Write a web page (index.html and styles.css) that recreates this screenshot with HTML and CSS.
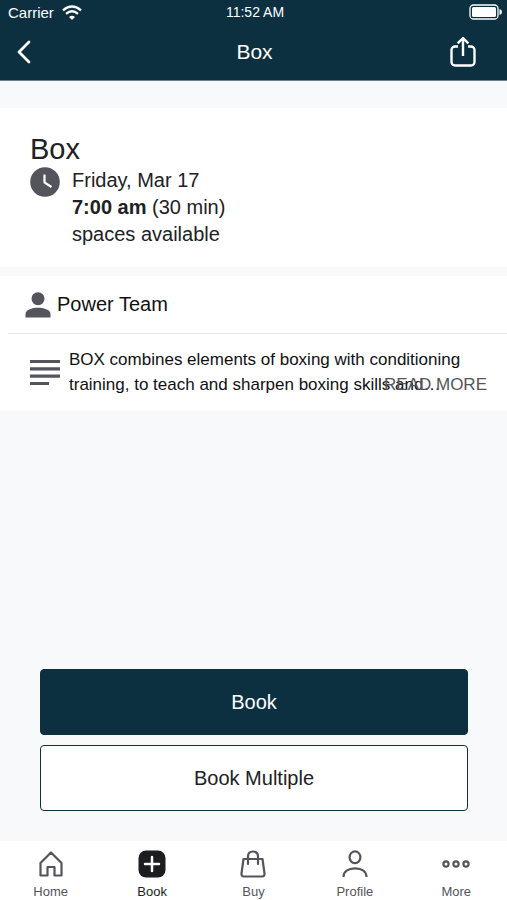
FILE: index.html
```html
<!DOCTYPE html>
<html lang="en">
<head>
<meta charset="utf-8">
<meta name="viewport" content="width=device-width, initial-scale=1">
<title>Box</title>
<link rel="stylesheet" href="styles.css">
</head>
<body>
<header class="top">
  <div class="status">
    <div class="carrier">
      <span>Carrier</span>
      <svg width="20" height="15" viewBox="0 0 20 15" aria-hidden="true"><path d="M1 5.3Q10-2.3 19 5.3M4 8.8Q10 3.8 16 8.8" fill="none" stroke="currentColor" stroke-width="2.3"/><path d="M7 12Q10 9.600 13 12L10 15Z" fill="currentColor"/></svg>
    </div>
    <time>11:52 AM</time>
    <svg class="battery" width="33" height="16" viewBox="0 0 33 16" aria-hidden="true"><rect x="1" y="1" width="28" height="14" rx="3.5" fill="none" stroke="currentColor" stroke-width="1.3"/><rect x="3" y="3" width="24" height="10" rx="1.5" fill="currentColor"/><path d="M30.5 5Q33 5.5 33 8T30.5 11Z" fill="currentColor"/></svg>
  </div>
  <div class="bar">
    <button class="icon-button" type="button" aria-label="Back"><svg width="16" height="24" viewBox="0 0 16 24"><path d="M13 2L3 12l10 10" fill="none" stroke="currentColor" stroke-width="2.8" stroke-linecap="round" stroke-linejoin="round"/></svg></button>
    <h1>Box</h1>
    <button class="icon-button share" type="button" aria-label="Share"><svg width="28" height="32" viewBox="0 0 28 32"><path d="M9 10.5H6a3.5 3.5 0 0 0-3.500 3.500V26A3.500 3.500 0 0 0 6 29.500H22A3.500 3.500 0 0 0 25.500 26V14A3.500 3.500 0 0 0 22 10.500H19M14 20V2.500M8.700 7.300L14 2l5.300 5.300" fill="none" stroke="currentColor" stroke-width="2.4" stroke-linejoin="round"/></svg></button>
  </div>
</header>
<main>
  <section class="card summary">
    <h2>Box</h2>
    <div class="when">
      <svg width="30" height="30" viewBox="0 0 30 30" aria-hidden="true"><circle cx="15" cy="15" r="14.800" fill="currentColor"/><path d="M14.500 7.500V15.500l7 4.500" fill="none" stroke="#fff" stroke-width="2.200"/></svg>
      <p>Friday, Mar 17<br><strong>7:00 am</strong> (30 min)<br>spaces available</p>
    </div>
  </section>
  <section class="card details">
    <div class="trainer">
      <svg width="26" height="26" viewBox="0 0 26 26" aria-hidden="true"><circle cx="13" cy="6.700" r="6.500" fill="currentColor"/><path d="M.5 25.500V22C.5 17.500 8 15.800 13 15.800S25.500 17.500 25.500 22v3.500Z" fill="currentColor"/></svg>
      <span>Power Team</span>
    </div>
    <div class="about">
      <svg width="30" height="27" viewBox="0 0 30 27" aria-hidden="true"><path d="M0 2.500H30M0 9.800H30M0 17.200H30M0 24.500H19" stroke="currentColor" stroke-width="3.200"/></svg>
      <p>BOX combines elements of boxing with conditioning training, to teach and sharpen boxing skills and…</p>
      <a class="read-more" href="#">READ MORE</a>
    </div>
  </section>
  <div class="actions">
    <button class="primary" type="button">Book</button>
    <button class="secondary" type="button">Book Multiple</button>
  </div>
</main>
<nav class="tabs">
  <a href="#"><svg width="28" height="28" viewBox="0 0 28 28"><path d="M3.500 13L14 2.500 24.500 13V25.500H17.500V17H10.500V25.500H3.500Z" fill="none" stroke="currentColor" stroke-width="2.200" stroke-linejoin="round"/></svg>Home</a>
  <a class="active" href="#" aria-current="page"><svg width="28" height="28" viewBox="0 0 28 28"><rect x=".5" y=".5" width="27" height="27" rx="7.500" fill="currentColor"/><path d="M14 7V21M7 14H21" stroke="#fff" stroke-width="2.500" stroke-linecap="round"/></svg>Book</a>
  <a href="#"><svg width="28" height="28" viewBox="0 0 28 28"><path d="M4.500 9H23.500L25.500 23.500Q25.800 26.500 23 26.500H5Q2.200 26.500 2.500 23.500ZM9 14V6.500Q9 1.500 14 1.500T19 6.500V14" fill="none" stroke="currentColor" stroke-width="2.200" stroke-linejoin="round" stroke-linecap="round"/></svg>Buy</a>
  <a href="#"><svg width="28" height="28" viewBox="0 0 28 28"><ellipse cx="14" cy="7.300" rx="5.400" ry="5.900" fill="none" stroke="currentColor" stroke-width="2.200"/><path d="M2.500 27C2.500 21.500 7 18.300 14 18.300S25.500 21.500 25.500 27" fill="none" stroke="currentColor" stroke-width="2.200"/></svg>Profile</a>
  <a href="#"><svg width="28" height="28" viewBox="0 0 28 28"><g fill="none" stroke="currentColor" stroke-width="2.200"><circle cx="4" cy="14" r="2.600"/><circle cx="14" cy="14" r="2.600"/><circle cx="24" cy="14" r="2.600"/></g></svg>More</a>
</nav>
</body>
</html>
```
FILE: styles.css
```css
* { box-sizing: border-box; }

body {
  margin: 0;
  min-height: 100vh;
  display: flex;
  flex-direction: column;
  background: #f7f9fb;
  color: #202124;
  font-family: "Liberation Sans", Arial, sans-serif;
}

h1, h2, p { margin: 0; font-weight: 400; }
svg { display: block; flex: none; }
button { font: inherit; cursor: pointer; }
a { color: inherit; text-decoration: none; }

.top {
  background: #0c303f;
  color: #fff;
  border-bottom: 1px solid #6c7f8a;
}

.status, .bar {
  display: grid;
  grid-template-columns: 1fr auto 1fr;
  align-items: center;
}
.status { height: 24px; padding: 0 5px 0 8px; font-size: 14px; }
.carrier { display: flex; align-items: center; gap: 8px; font-size: 15px; }
.battery { justify-self: end; }

.bar { height: 56px; padding: 0 30px 0 16px; }
.bar h1 { font-size: 21px; padding-left: 16px; }
.icon-button {
  padding: 0;
  border: 0;
  background: none;
  color: inherit;
  justify-self: start;
}
.share { justify-self: end; }

main { flex: 1; display: flex; flex-direction: column; padding-top: 27px; }
.card { background: #fff; }

.summary { padding: 23px 30px 19px; margin-bottom: 9px; }
.summary h2 { font-size: 29px; line-height: 36px; }
.when { display: flex; gap: 12px; color: #54555c; }
.when p { color: #202124; font-size: 20px; line-height: 27px; }

.trainer {
  display: flex;
  align-items: center;
  gap: 6px;
  height: 58px;
  margin-left: 8px;
  padding-left: 17px;
  border-bottom: 1px solid #e6e8ea;
  color: #54555c;
  font-size: 20px;
}
.trainer span, .about p { color: #101114; }

.about {
  position: relative;
  display: flex;
  align-items: center;
  gap: 9px;
  padding: 13px 20px 13px 30px;
  color: #54555c;
  font-size: 17px;
  line-height: 25px;
}
.read-more { position: absolute; right: 20px; bottom: 13px; }

.actions {
  display: flex;
  flex-direction: column;
  gap: 10px;
  margin-top: auto;
  padding: 30px 39px 30px 40px;
}
.actions button {
  height: 66px;
  border: 1px solid #0c303f;
  border-radius: 4px;
  font-size: 20px;
}
.actions .primary { background: #0c303f; color: #fff; }
.actions .secondary { background: #fff; color: #202124; }

.tabs {
  display: grid;
  grid-template-columns: repeat(5, 1fr);
  height: 59px;
  padding-top: 9px;
  background: #fff;
}
.tabs a {
  display: flex;
  flex-direction: column;
  align-items: center;
  gap: 6px;
  color: #54555c;
  font-size: 13px;
  line-height: 16px;
}
.tabs .active { color: #1c1d21; }
```
